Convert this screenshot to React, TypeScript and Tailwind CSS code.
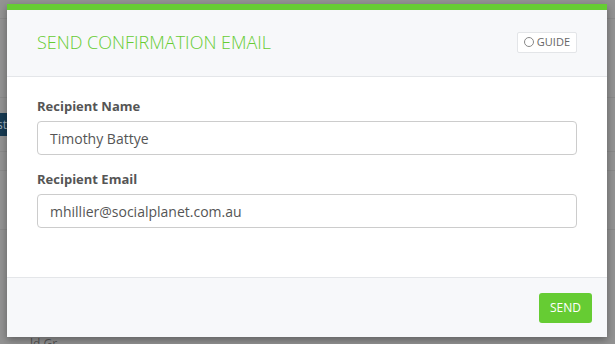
import React from "react";

export default function App() {
  return (
    <div
      className="relative w-[615px] h-[344px] overflow-hidden bg-[#939393]"
      style={{ fontFamily: '"Open Sans", "Noto Sans", sans-serif' }}
    >
      {/* underlying page (dimmed) */}
      <div className="flex flex-col w-full h-full">
        <div className="h-[19px] border-b border-[#8a8a8a]" />
        <div className="h-[79px] border-b border-[#8a8a8a]" />
        <div className="h-[15px]" />
        <div className="h-[23px] w-[8px] bg-[#173a52] text-[12px] leading-[23px] text-[#9fb0bd] overflow-hidden whitespace-nowrap">
          <span className="ml-[-3px]">st</span>
        </div>
        <div className="h-[16px] border-b border-[#8a8a8a]" />
        <div className="h-[19px] border-b border-[#8a8a8a]" />
        <div className="h-[59px] border-b border-[#8a8a8a]" />
        <div className="flex-1" />
        <div className="h-[6px] pl-[30px] text-[12px] leading-[12px] text-[#555]">ld Gr</div>
      </div>

      {/* modal */}
      <div className="absolute left-[7px] top-[4px] w-[600px] h-[333px] flex flex-col bg-white border-t-[6px] border-[#66cc33] shadow-[0_3px_8px_rgba(0,0,0,0.35)]">
        <div className="h-[67px] flex items-center justify-between bg-[#f7f8fa] border-b border-[#e4e6e9] pl-[30px] pr-[30px]">
          <h2 className="text-[18px] font-light text-[#66cc33] tracking-[0px] mt-[-1px]">
            SEND CONFIRMATION EMAIL
          </h2>
          <button className="flex items-center gap-[3px] h-[21px] px-[6px] bg-white border border-[#e3e5e8] rounded-[2px] text-[11px] text-[#666] mt-[-2px]">
            <span className="inline-block w-[10px] h-[10px] rounded-full border-[1.5px] border-[#888]" />
            GUIDE
          </button>
        </div>

        <div className="flex-1 flex flex-col px-[30px] pt-[20px]">
          <label className="text-[13px] font-bold text-[#555] leading-[18px]">Recipient Name</label>
          <div className="mt-[6px] h-[34px] flex items-center border border-[#cccccc] rounded-[4px] px-[12px] text-[14px] text-[#555]">
            Timothy Battye
          </div>
          <label className="mt-[15px] text-[13px] font-bold text-[#555] leading-[18px]">Recipient Email</label>
          <div className="mt-[6px] h-[34px] flex items-center border border-[#cccccc] rounded-[4px] px-[12px] text-[14px] text-[#555]">
            mhillier@socialplanet.com.au
          </div>
        </div>

        <div className="h-[60px] flex items-center justify-end bg-[#f7f8fa] border-t border-[#e4e6e9] pr-[15px]">
          <button className="h-[30px] px-[11px] bg-[#66cc33] rounded-[3px] text-white text-[12px]">
            SEND
          </button>
        </div>
      </div>
    </div>
  );
}
